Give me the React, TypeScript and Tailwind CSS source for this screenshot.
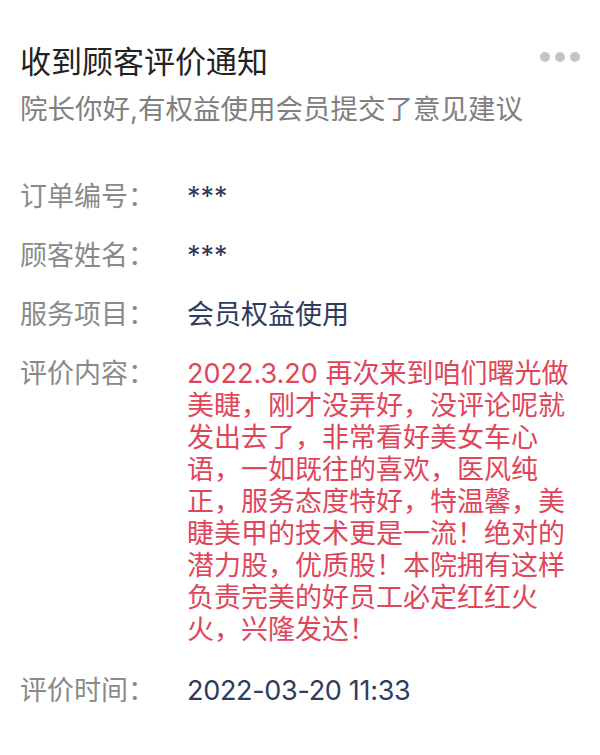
const rows = [
  { label: "订单编号：", value: "***" },
  { label: "顾客姓名：", value: "***" },
  { label: "服务项目：", value: "会员权益使用" },
];

const review =
  "2022.3.20 再次来到咱们曙光做美睫，刚才没弄好，没评论呢就发出去了，非常看好美女车心语，一如既往的喜欢，医风纯正，服务态度特好，特温馨，美睫美甲的技术更是一流！绝对的潜力股，优质股！本院拥有这样负责完美的好员工必定红红火火，兴隆发达！";

export default function App() {
  return (
    <div className="min-h-[755px] w-[600px] bg-white px-5 pt-[42px] font-['Inter','Noto_Sans_CJK_SC',sans-serif]">
      <div className="flex items-start justify-between">
        <h1 className="text-[31px] leading-[40px] font-normal text-[#222222]">收到顾客评价通知</h1>
        <div className="mt-[10px] flex gap-[5px]">
          <span className="h-[10px] w-[10px] rounded-full bg-[#c4c4c4]" />
          <span className="h-[10px] w-[10px] rounded-full bg-[#c4c4c4]" />
          <span className="h-[10px] w-[10px] rounded-full bg-[#c4c4c4]" />
        </div>
      </div>
      <p className="mt-[9px] text-[27.5px] leading-[36px] text-[#808080]">院长你好,有权益使用会员提交了意见建议</p>

      <div className="mt-[54px] flex flex-col gap-[27px] text-[27px] leading-[32px]">
        {rows.map((r) => (
          <div key={r.label} className="flex">
            <span className="w-[167px] shrink-0 text-[#8a8a8a]">{r.label}</span>
            <span className="text-[#2f3b5e]">{r.value}</span>
          </div>
        ))}
        <div className="flex">
          <span className="w-[167px] shrink-0 text-[#8a8a8a]">评价内容：</span>
          <p className="w-[392px] text-[#e0465a]">{review}</p>
        </div>
        <div className="mt-[2px] flex">
          <span className="w-[167px] shrink-0 text-[#8a8a8a]">评价时间：</span>
          <span className="tracking-[-0.3px] text-[#2f3b5e]">2022-03-20 11:33</span>
        </div>
      </div>
    </div>
  );
}
